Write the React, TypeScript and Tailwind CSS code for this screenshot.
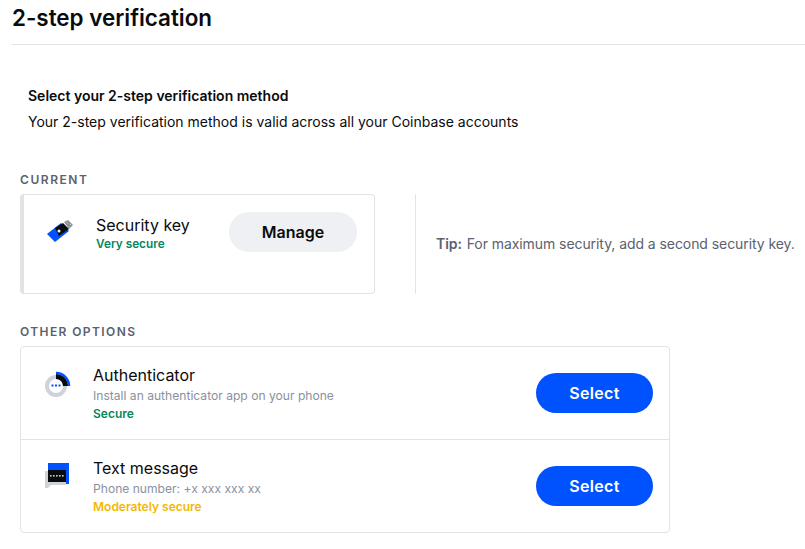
import React from 'react';

const font = { fontFamily: 'Inter, "Liberation Sans", sans-serif' };

const KeyIcon = () => (
  <svg width="30" height="30" viewBox="0 0 30 30" className="shrink-0">
    <path d="M18 3l4-2 5 5-4 4z" fill="#8a8f98" />
    <path d="M21 3.5l1 1M24 5l1 1M20 6l1 1M23 7.5l1 1" stroke="#d5d8dd" strokeWidth="1" />
    <path d="M1 15L15 4l8 8L9 23z" fill="#0052ff" />
    <path d="M9 9l8-5 6 6-10 7z" fill="#0a0b0d" />
    <circle cx="13" cy="12" r="1.5" fill="#fff" />
  </svg>
);

const AuthIcon = () => (
  <svg width="30" height="30" viewBox="0 0 30 30" className="shrink-0">
    <circle cx="14" cy="16" r="9" fill="none" stroke="#ced2db" strokeWidth="4" />
    <path d="M14 6.5A9.5 9.5 0 0 1 23.5 16" fill="none" stroke="#0a0b0d" strokeWidth="5" />
    <path d="M14 3A13 13 0 0 1 27 16" fill="none" stroke="#0052ff" strokeWidth="2.5" />
    <rect x="9.5" y="14.5" width="2" height="2" fill="#0052ff" />
    <rect x="13" y="14.5" width="2" height="2" fill="#0052ff" />
    <rect x="16.5" y="14.5" width="2" height="2" fill="#0052ff" />
  </svg>
);

const SmsIcon = () => (
  <svg width="30" height="30" viewBox="0 0 30 30" className="shrink-0">
    <rect x="6" y="3" width="21" height="21" fill="#0052ff" />
    <path d="M3 11h3v11h18v3H9l-3 3H3z" fill="#ced2db" />
    <rect x="6" y="10" width="18" height="12" fill="#0a0b0d" />
    {[8, 11, 14, 17, 20].map(x => (
      <rect key={x} x={x} y="15" width="1.6" height="1.6" fill="#c8ccd2" />
    ))}
  </svg>
);

const Option = ({ icon, iconClass, title, desc, status, statusClass, rowClass }: { icon: React.ReactNode; iconClass: string; title: string; desc: string; status: string; statusClass: string; rowClass: string }) => (
  <div className={`flex items-center pl-[21px] pr-4 ${rowClass}`}>
    <div className={`w-[51px] ${iconClass}`}>{icon}</div>
    <div className="flex-1 pt-[2px]">
      <div className="text-[16px] leading-[20px] text-[#0a0b0d]">{title}</div>
      <div className="mt-[2px] text-[12.1px] leading-[18px] text-[#8a919e]">{desc}</div>
      <div className={`text-[12px] font-semibold leading-[18px] ${statusClass}`}>{status}</div>
    </div>
    <button className="h-[40px] w-[117px] rounded-full bg-[#0052ff] text-[16px] font-semibold tracking-[0.3px] text-white">Select</button>
  </div>
);

export default function App() {
  return (
    <div className="h-[549px] w-[805px] overflow-hidden bg-white" style={font}>
      <div className="ml-[12px] h-[45px] border-b border-[#e2e3e6] pt-[4px]">
        <h1 className="text-[22.4px] font-semibold leading-[28px] text-[#0a0b0d]">2-step verification</h1>
      </div>

      <div className="pl-[28px] pt-[41px]">
        <div className="text-[14px] font-semibold leading-[20px] text-[#0a0b0d]">Select your 2-step verification method</div>
        <div className="mt-[6px] text-[14px] leading-[20px] text-[#0a0b0d]">Your 2-step verification method is valid across all your Coinbase accounts</div>
      </div>

      <div className="ml-[20px] mt-[40px]">
        <div className="text-[12px] font-semibold leading-[16px] tracking-[1.55px] text-[#5b616e]">CURRENT</div>
        <div className="mt-[6px] flex">
          <div className="flex h-[100px] w-[355px] rounded border border-l-4 border-[#e2e3e6] pl-[22px] pt-[17px]">
            <div className="mr-[20px] mt-[7px]"><KeyIcon /></div>
            <div className="w-[133px] pt-[3px]">
              <div className="text-[16px] leading-[20px] text-[#0a0b0d]">Security key</div>
              <div className="text-[11.8px] font-semibold leading-[18px] text-[#05875f]">Very secure</div>
            </div>
            <button className="h-[40px] w-[128px] rounded-full bg-[#eef0f3] text-[16px] font-semibold text-[#0a0b0d]">Manage</button>
          </div>
          <div className="ml-[40px] flex h-[100px] items-center border-l border-[#e2e3e6] pl-[20px]">
            <span className="whitespace-nowrap text-[14px] leading-[20px] tracking-[-0.07px] text-[#5b616e]"><span className="mr-[1px] font-semibold">Tip:</span> For maximum security, add a second security key.</span>
          </div>
        </div>
      </div>

      <div className="ml-[20px] mt-[30px]">
        <div className="text-[12px] font-semibold leading-[16px] tracking-[1.4px] text-[#5b616e]">OTHER OPTIONS</div>
        <div className="mt-[6px] w-[650px] rounded border border-[#e2e3e6]">
          <Option icon={<AuthIcon />} iconClass="mb-[17px]" title="Authenticator" desc="Install an authenticator app on your phone" status="Secure" statusClass="text-[#05875f]" rowClass="h-[93px] border-b border-[#e2e3e6]" />
          <Option icon={<SmsIcon />} iconClass="mb-[22px]" title="Text message" desc="Phone number: +x xxx xxx xx" status="Moderately secure" statusClass="text-[#f4b800]" rowClass="h-[92px]" />
        </div>
      </div>
    </div>
  );
}
